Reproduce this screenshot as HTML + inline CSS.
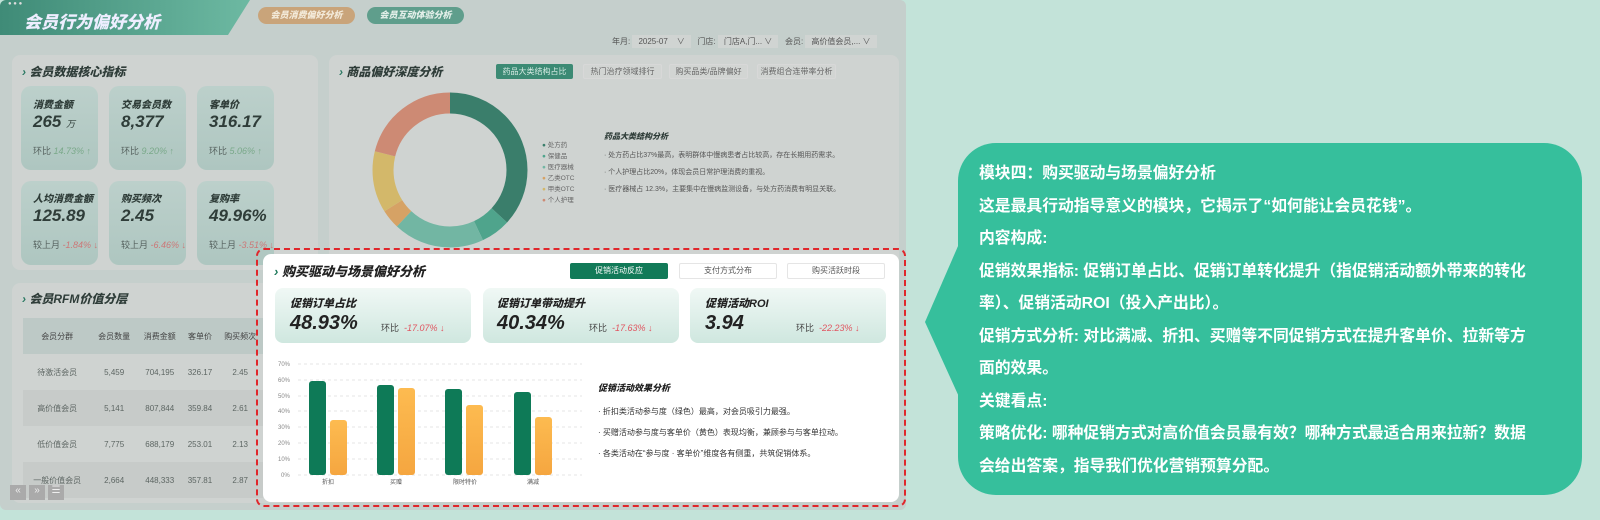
<!DOCTYPE html><html><head><meta charset="utf-8"><style>
*{margin:0;padding:0;box-sizing:border-box}
body{width:1600px;height:520px;overflow:hidden;background:#c3e3d9;font-family:"Liberation Sans","Noto Sans CJK SC",sans-serif;position:relative}
.a{position:absolute}
.dash{left:0;top:0;width:906px;height:510px;background:#c5cfcc;border-radius:6px;overflow:hidden}
.pan{background:#cfd3d1;border-radius:8px}
.t{font-weight:900;font-style:italic;color:#2f3d39}
.card{background:linear-gradient(#bcd0cb,#aec6c0);border-radius:10px}
.cs{font-size:9px;color:#56625f}
.tab{font-size:8px;color:#666;border:1px solid #d8d8d8;background:#d2d5d3;text-align:center;line-height:13px;border-radius:2px}
.tbl td{font-size:8px;color:#5d6663;text-align:center;height:36px}
.kp{background:linear-gradient(#f0f8f5,#cfe7df);border-radius:8px}
.bub{left:958px;top:143px;width:624px;height:352px;background:#36bf9c;border-radius:38px;color:#fff;font-size:15.8px;font-weight:bold;line-height:32.5px;padding:15px 0 0 21px;white-space:nowrap}
</style></head><body>
<div class="a dash">
 <div class="a" style="left:0;top:0;width:250px;height:35px;background:linear-gradient(90deg,#3f8b77,#6db9a2);clip-path:polygon(0 0,250px 0,228px 35px,0 35px)"></div>
 <div class="a" style="left:8px;top:1px;font-size:6px;color:#ddd">● ● ●</div>
 <div class="a t" style="left:24px;top:8px;font-size:17px;color:#eef">会员行为偏好分析</div>
 <div class="a" style="left:258px;top:7px;width:97px;height:17px;background:#c9a47a;border-radius:9px;color:#f3ead9;font-size:9px;font-weight:900;font-style:italic;text-align:center;line-height:17px">会员消费偏好分析</div>
 <div class="a" style="left:367px;top:7px;width:97px;height:17px;background:#5f9e8c;border-radius:9px;color:#e3efe9;font-size:9px;font-weight:900;font-style:italic;text-align:center;line-height:17px">会员互动体验分析</div>
 <div class="a" style="left:612px;top:36px;font-size:8px;color:#555">年月: <span style="background:#d0d4d2;padding:2px 6px">2025-07 &nbsp;&nbsp; ∨</span> &nbsp; 门店: <span style="background:#d0d4d2;padding:2px 6px">门店A,门... ∨</span> &nbsp; 会员: <span style="background:#d0d4d2;padding:2px 6px">高价值会员,... ∨</span></div>
 <div class="a pan" style="left:12px;top:55px;width:306px;height:215px"></div>
 <div class="a t" style="left:22px;top:63px;font-size:12px"><span style="color:#2d7a64">›</span> 会员数据核心指标</div>
 <div class="a card" style="left:21px;top:86px;width:77px;height:84px"></div>
 <div class="a card" style="left:109px;top:86px;width:77px;height:84px"></div>
 <div class="a card" style="left:197px;top:86px;width:77px;height:84px"></div>
 <div class="a card" style="left:21px;top:181px;width:77px;height:84px"></div>
 <div class="a card" style="left:109px;top:181px;width:77px;height:84px"></div>
 <div class="a card" style="left:197px;top:181px;width:77px;height:84px"></div>
 <div class="a t" style="left:33px;top:96px;font-size:10px">消费金额</div>
 <div class="a t" style="left:121px;top:96px;font-size:10px">交易会员数</div>
 <div class="a t" style="left:209px;top:96px;font-size:10px">客单价</div>
 <div class="a t" style="left:33px;top:190px;font-size:10px">人均消费金额</div>
 <div class="a t" style="left:121px;top:190px;font-size:10px">购买频次</div>
 <div class="a t" style="left:209px;top:190px;font-size:10px">复购率</div>
 <div class="a t" style="left:33px;top:112px;font-size:17px">265 <span style="font-size:9px;font-weight:normal">万</span></div>
 <div class="a t" style="left:121px;top:112px;font-size:17px">8,377</div>
 <div class="a t" style="left:209px;top:112px;font-size:17px">316.17</div>
 <div class="a t" style="left:33px;top:206px;font-size:17px">125.89</div>
 <div class="a t" style="left:121px;top:206px;font-size:17px">2.45</div>
 <div class="a t" style="left:209px;top:206px;font-size:17px">49.96%</div>
 <div class="a cs" style="left:33px;top:144px">环比 <i style="color:#7aa98a">14.73% ↑</i></div>
 <div class="a cs" style="left:121px;top:144px">环比 <i style="color:#7aa98a">9.20% ↑</i></div>
 <div class="a cs" style="left:209px;top:144px">环比 <i style="color:#7aa98a">5.06% ↑</i></div>
 <div class="a cs" style="left:33px;top:238px">较上月 <i style="color:#c77">-1.84% ↓</i></div>
 <div class="a cs" style="left:121px;top:238px">较上月 <i style="color:#c77">-6.46% ↓</i></div>
 <div class="a cs" style="left:209px;top:238px">较上月 <i style="color:#c77">-3.51% ↓</i></div>
 <div class="a pan" style="left:329px;top:55px;width:570px;height:215px"></div>
 <div class="a t" style="left:339px;top:63px;font-size:12px"><span style="color:#2d7a64">›</span> 商品偏好深度分析</div>
 <div class="a tab" style="left:496px;top:64px;width:77px;background:#3c8a74;color:#d7ebe4;border-color:#3c8a74">药品大类结构占比</div>
 <div class="a tab" style="left:583px;top:64px;width:79px">热门治疗领域排行</div>
 <div class="a tab" style="left:669px;top:64px;width:79px">购买品类/品牌偏好</div>
 <div class="a tab" style="left:757px;top:64px;width:79px">消费组合连带率分析</div>
 <svg class="a" style="left:360px;top:85px" width="180" height="180" viewBox="0 0 180 180"><g transform="rotate(-90 90 85)" fill="none" stroke-width="21">
 <circle cx="90" cy="85" r="67" stroke="#3a7e6b" stroke-dasharray="155 421" stroke-dashoffset="0"/>
 <circle cx="90" cy="85" r="67" stroke="#4fa48c" stroke-dasharray="26 421" stroke-dashoffset="-155"/>
 <circle cx="90" cy="85" r="67" stroke="#72b6a3" stroke-dasharray="80 421" stroke-dashoffset="-181"/>
 <circle cx="90" cy="85" r="67" stroke="#d6a265" stroke-dasharray="17 421" stroke-dashoffset="-261"/>
 <circle cx="90" cy="85" r="67" stroke="#d3b86a" stroke-dasharray="54 421" stroke-dashoffset="-278"/>
 <circle cx="90" cy="85" r="67" stroke="#cd8a74" stroke-dasharray="89 421" stroke-dashoffset="-332"/></g></svg>
 <div class="a" style="left:542px;top:140px;font-size:6.5px;color:#666;line-height:11px"><span style="color:#3a7e6b">●</span> 处方药<br><span style="color:#4fa48c">●</span> 保健品<br><span style="color:#72b6a3">●</span> 医疗器械<br><span style="color:#d6a265">●</span> 乙类OTC<br><span style="color:#d3b86a">●</span> 甲类OTC<br><span style="color:#cd8a74">●</span> 个人护理</div>
 <div class="a t" style="left:604px;top:131px;font-size:8px">药品大类结构分析</div>
 <div class="a" style="left:604px;top:150px;width:240px;font-size:7px;color:#555;line-height:11px">· 处方药占比37%最高，表明群体中慢病患者占比较高，存在长期用药需求。<br><div style="height:6px"></div>· 个人护理占比20%，体现会员日常护理消费的重视。<br><div style="height:6px"></div>· 医疗器械占 12.3%，主要集中在慢病监测设备，与处方药消费有明显关联。</div>
 <div class="a pan" style="left:12px;top:283px;width:300px;height:220px"></div>
 <div class="a t" style="left:22px;top:290px;font-size:12px"><span style="color:#2d7a64">›</span> 会员RFM价值分层</div>
 <table class="a tbl" style="left:23px;top:318px;width:240px;border-collapse:collapse">
 <tr style="background:#bdc9c6"><td style="height:35px;color:#444">会员分群</td><td style="color:#444">会员数量</td><td style="color:#444">消费金额</td><td style="color:#444">客单价</td><td style="color:#444">购买频次</td></tr>
 <tr><td>待激活会员</td><td>5,459</td><td>704,195</td><td>326.17</td><td>2.45</td></tr>
 <tr style="background:#c7cbc9"><td>高价值会员</td><td>5,141</td><td>807,844</td><td>359.84</td><td>2.61</td></tr>
 <tr><td>低价值会员</td><td>7,775</td><td>688,179</td><td>253.01</td><td>2.13</td></tr>
 <tr style="background:#c7cbc9"><td>一般价值会员</td><td>2,664</td><td>448,333</td><td>357.81</td><td>2.87</td></tr></table>
 <div class="a" style="left:10px;top:485px;width:16px;height:15px;background:#aaa;color:#eee;font-size:10px;text-align:center">«</div>
 <div class="a" style="left:29px;top:485px;width:16px;height:15px;background:#aaa;color:#eee;font-size:10px;text-align:center">»</div>
 <div class="a" style="left:48px;top:485px;width:16px;height:15px;background:#aaa;color:#eee;font-size:10px;text-align:center">☰</div>
</div>
<div class="a" style="left:256px;top:248px;width:650px;height:259px;border:2px dashed #e0262b;border-radius:8px"></div>
<div class="a" style="left:263px;top:254px;width:636px;height:248px;background:#fff;border-radius:8px"></div>
<div class="a t" style="left:274px;top:261px;font-size:13px;color:#222"><span style="color:#1f7a5c">›</span> 购买驱动与场景偏好分析</div>
<div class="a" style="left:570px;top:263px;width:98px;height:16px;background:#127a58;color:#fff;font-size:8px;text-align:center;line-height:16px;border-radius:2px">促销活动反应</div>
<div class="a" style="left:679px;top:263px;width:98px;height:16px;border:1px solid #e5e5e5;color:#555;font-size:8px;text-align:center;line-height:14px;border-radius:2px">支付方式分布</div>
<div class="a" style="left:787px;top:263px;width:98px;height:16px;border:1px solid #e5e5e5;color:#555;font-size:8px;text-align:center;line-height:14px;border-radius:2px">购买活跃时段</div>
<div class="a kp" style="left:275px;top:288px;width:196px;height:55px"></div>
<div class="a kp" style="left:483px;top:288px;width:196px;height:55px"></div>
<div class="a kp" style="left:690px;top:288px;width:196px;height:55px"></div>
<div class="a t" style="left:290px;top:295px;font-size:11px;color:#222">促销订单占比</div>
<div class="a t" style="left:497px;top:295px;font-size:11px;color:#222">促销订单带动提升</div>
<div class="a t" style="left:705px;top:295px;font-size:11px;color:#222">促销活动ROI</div>
<div class="a t" style="left:290px;top:312px;font-size:20px;color:#222">48.93%</div>
<div class="a t" style="left:497px;top:312px;font-size:20px;color:#222">40.34%</div>
<div class="a t" style="left:705px;top:312px;font-size:20px;color:#222">3.94</div>
<div class="a" style="left:381px;top:321px;font-size:9px;color:#444">环比 &nbsp;<i style="color:#e05560">-17.07% ↓</i></div>
<div class="a" style="left:589px;top:321px;font-size:9px;color:#444">环比 &nbsp;<i style="color:#e05560">-17.63% ↓</i></div>
<div class="a" style="left:796px;top:321px;font-size:9px;color:#444">环比 &nbsp;<i style="color:#e05560">-22.23% ↓</i></div>
<svg class="a" style="left:270px;top:356px" width="320" height="135">
<g font-size="6" fill="#888" font-family="Liberation Sans"><text x="8" y="10">70%</text><text x="8" y="26">60%</text><text x="8" y="42">50%</text><text x="8" y="57">40%</text><text x="8" y="73">30%</text><text x="8" y="89">20%</text><text x="8" y="105">10%</text><text x="11" y="121">0%</text></g>
<g stroke="#e6e6e6" stroke-dasharray="3 3"><line x1="28" y1="8" x2="312" y2="8"/><line x1="28" y1="24" x2="312" y2="24"/><line x1="28" y1="40" x2="312" y2="40"/><line x1="28" y1="55" x2="312" y2="55"/><line x1="28" y1="71" x2="312" y2="71"/><line x1="28" y1="87" x2="312" y2="87"/><line x1="28" y1="103" x2="312" y2="103"/><line x1="28" y1="119" x2="312" y2="119"/></g>
<defs><linearGradient id="y" x1="0" y1="0" x2="0" y2="1"><stop offset="0" stop-color="#fdbb50"/><stop offset="1" stop-color="#f5a640"/></linearGradient></defs>
<g fill="#0e7a57"><rect x="39" y="25" width="17" height="94" rx="3"/><rect x="107" y="29" width="17" height="90" rx="3"/><rect x="175" y="33" width="17" height="86" rx="3"/><rect x="244" y="36" width="17" height="83" rx="3"/></g>
<g fill="url(#y)"><rect x="60" y="64" width="17" height="55" rx="3"/><rect x="128" y="32" width="17" height="87" rx="3"/><rect x="196" y="49" width="17" height="70" rx="3"/><rect x="265" y="61" width="17" height="58" rx="3"/></g>
<g font-size="6" fill="#555" font-family="Liberation Sans,Noto Sans CJK SC"><text x="52" y="128">折扣</text><text x="120" y="128">买赠</text><text x="183" y="128">限时特价</text><text x="257" y="128">满减</text></g></svg>
<div class="a t" style="left:598px;top:381px;font-size:9px;color:#222">促销活动效果分析</div>
<div class="a" style="left:598px;top:401px;font-size:8px;color:#333;line-height:21px">· 折扣类活动参与度（绿色）最高，对会员吸引力最强。<br>· 买赠活动参与度与客单价（黄色）表现均衡，兼顾参与与客单拉动。<br>· 各类活动在“参与度 · 客单价”维度各有侧重，共筑促销体系。</div>
<div class="a" style="left:925px;top:230px;width:50px;height:180px;background:#36bf9c;clip-path:polygon(0 92px,40px 0,50px 0,50px 180px,40px 180px)"></div>
<div class="a bub">模块四：购买驱动与场景偏好分析<br>这是最具行动指导意义的模块，它揭示了“如何能让会员花钱”。<br>内容构成:<br>促销效果指标: 促销订单占比、促销订单转化提升（指促销活动额外带来的转化<br>率）、促销活动ROI（投入产出比）。<br>促销方式分析: 对比满减、折扣、买赠等不同促销方式在提升客单价、拉新等方<br>面的效果。<br>关键看点:<br>策略优化: 哪种促销方式对高价值会员最有效？哪种方式最适合用来拉新？数据<br>会给出答案，指导我们优化营销预算分配。</div>
</body></html>
